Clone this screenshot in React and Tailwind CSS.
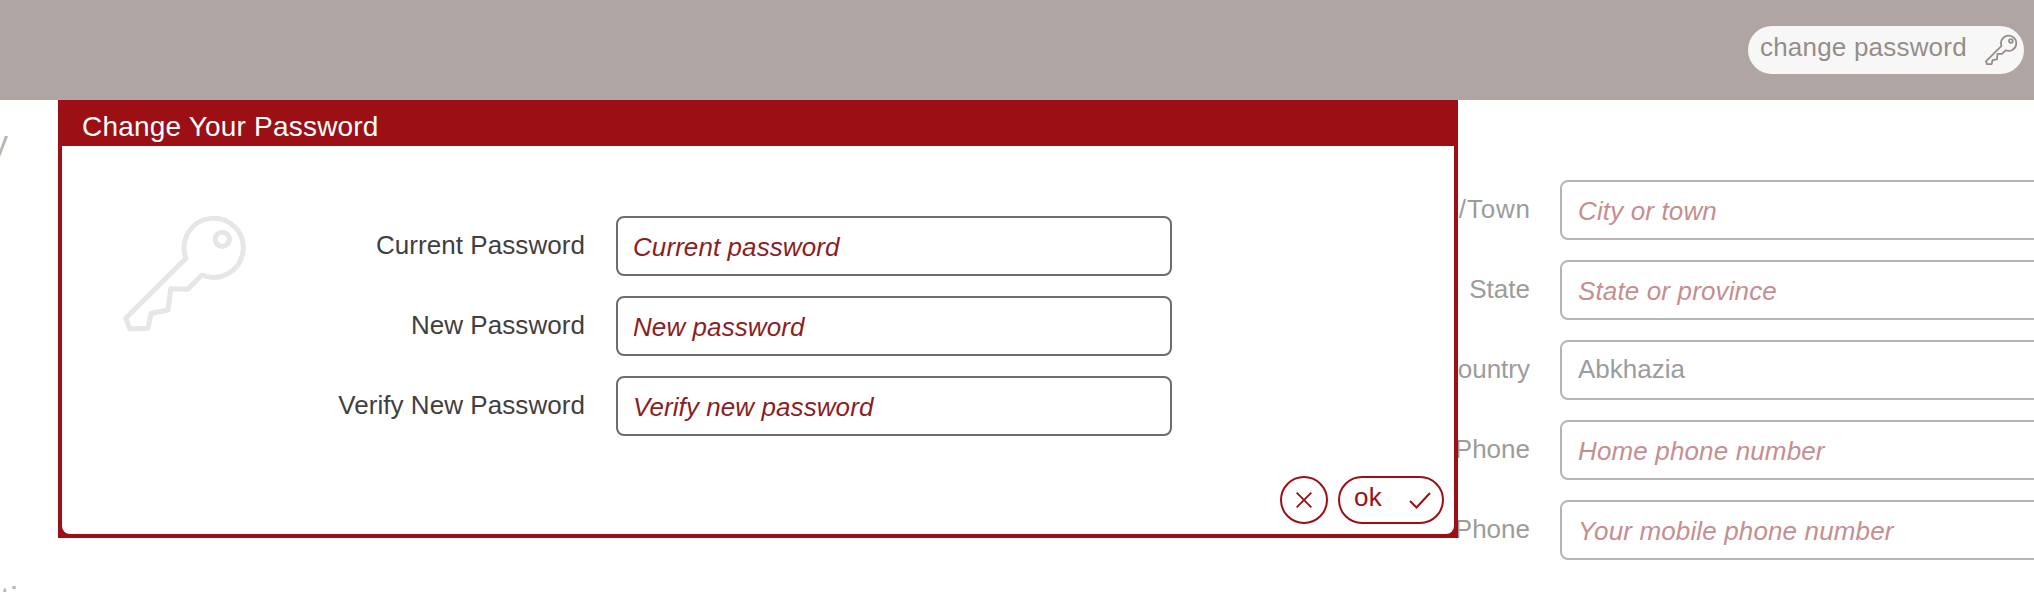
function Key({ className, strokeWidth }) {
  return (
    <svg viewBox="0 0 126 120" className={className} fill="none" stroke="currentColor" strokeWidth={strokeWidth} strokeLinejoin="round">
      <path d="M63 46.300 A29.600 29.600 0 1 1 79 63 L64.700 77.300 L47.700 76.700 L45 98 L28.300 101.300 L24.700 116.300 L7 117 L2.700 106.300 Z" />
      <circle cx="99.300" cy="27.300" r="7.100" />
    </svg>
  );
}

function Field({ label, labelClass = "", placeholder, value, muted }) {
  return (
    <div className="flex h-[60px] items-start">
      <div className={muted ? "w-[294px] shrink-0 pt-[14px] pr-[30px] text-right text-[#9c9c9c] leading-[30px]" : "w-[554px] shrink-0 pt-[14px] pr-[31px] text-right text-[#404041] leading-[30px] tracking-[0.06px]"}>
        <span className={labelClass}>{label}</span>
      </div>
      <div className={muted ? "h-[60px] w-[556px] shrink-0 rounded-lg border-2 border-[#b5b5b5] pl-4 leading-[30px]" : "h-[60px] w-[556px] shrink-0 rounded-lg border-2 border-[#6d6d6e] pl-[15px] leading-[30px]"}>
        {value ? (
          <div className="pt-3 text-[#9c9c9c]">{value}</div>
        ) : (
          <div className={muted ? "pt-[14px] italic tracking-[0.14px] text-[#c58e90]" : "pt-[14px] italic tracking-[0.08px] text-[#8b1e23]"}>{placeholder}</div>
        )}
      </div>
    </div>
  );
}

export default function App() {
  return (
    <div className="relative h-[592px] w-[2034px] overflow-hidden bg-white font-['Liberation_Sans',Arial,sans-serif] text-[26px] whitespace-nowrap">
      <header className="flex h-[100px] items-center justify-end bg-[#afa6a4] pr-[10px]">
        <button className="flex h-12 w-[276px] items-center justify-between rounded-full bg-[#f7f7f7] pr-[6px] pl-[12px] text-[#968d8b]">
          <span className="-mt-1.5 leading-[30px] tracking-[0.2px]">change password</span>
          <Key className="-mt-[2px] h-[31px] w-[33px]" strokeWidth="7" />
        </button>
      </header>

      <main className="flex h-[492px] justify-between overflow-hidden">
        <div className="flex w-[58px] flex-col justify-between text-[34px] text-[#b5b5b5]">
          <div className="-ml-[81px] w-[89px] pt-[22px] text-right leading-[40px]">My</div>
          <div className="-mb-[29px] leading-[40px] text-[36px]">ti</div>
        </div>
        <div className="-mr-[82px] flex w-[850px] flex-col gap-5 pt-20">
          <Field muted label="City/Town" labelClass="tracking-[0.8px] -mr-[0.8px]" placeholder="City or town" />
          <Field muted label="State" placeholder="State or province" />
          <Field muted label="Country" value="Abkhazia" />
          <Field muted label="Home Phone" placeholder="Home phone number" />
          <Field muted label="Mobile Phone" placeholder="Your mobile phone number" />
        </div>
      </main>

      <section className="absolute top-[100px] left-[58px] flex h-[438px] w-[1400px] flex-col bg-[#9b0f15] px-1 pb-1">
        <h2 className="h-[46px] pt-[11px] pl-5 text-[28px] leading-[32px] tracking-[0.2px] text-white">Change Your Password</h2>
        <div className="flex flex-1 flex-col rounded-b-lg bg-white">
          <div className="flex pt-[70px]">
            <Key className="-mt-1 -mr-[187px] ml-[61px] h-[120px] w-[126px] shrink-0 text-[#e6e6e6]" strokeWidth="5" />
            <div className="flex flex-col gap-5">
              <Field label="Current Password" placeholder="Current password" />
              <Field label="New Password" placeholder="New password" />
              <Field label="Verify New Password" placeholder="Verify new password" />
            </div>
          </div>
          <div className="mt-10 flex justify-end gap-[10px] pr-[10px] text-[#9b0f15]">
            <button className="flex size-12 items-center justify-center rounded-full border-2 border-[#9b0f15]">
              <svg viewBox="0 0 16 16" className="size-4" fill="none" stroke="currentColor" strokeWidth="1.800">
                <path d="M0.700 0.700 L15.300 15.300 M15.300 0.700 L0.700 15.300" />
              </svg>
            </button>
            <button className="flex h-12 w-[106px] items-center justify-between rounded-full border-2 border-[#9b0f15] pr-[11px] pl-[14px]">
              <span className="-mt-1.5 leading-[30px] tracking-[0.4px]">ok</span>
              <svg viewBox="0 0 22 17" className="h-[17px] w-[22px]" fill="none" stroke="currentColor" strokeWidth="2">
                <path d="M1 9 L7.500 15.500 L21 1" />
              </svg>
            </button>
          </div>
        </div>
      </section>
    </div>
  );
}
